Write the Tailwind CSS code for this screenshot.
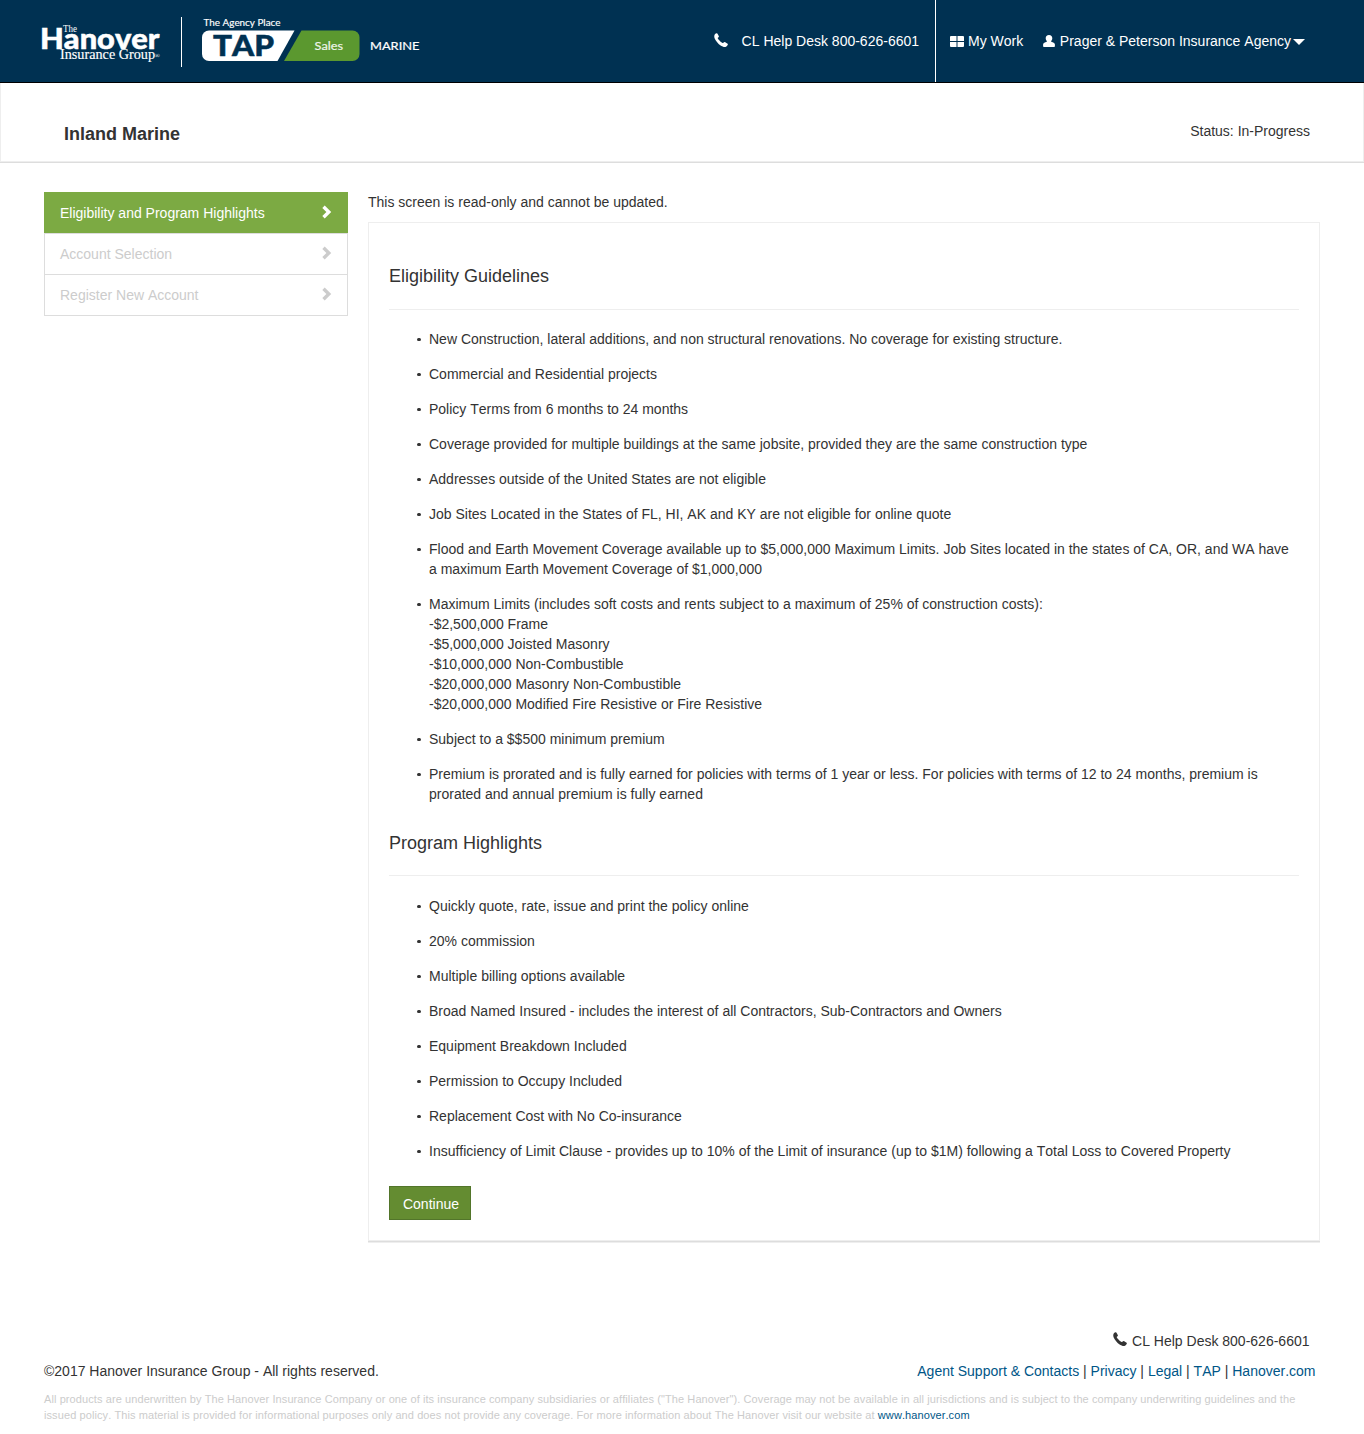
<!DOCTYPE html>
<html lang="en">
<head>
<meta charset="utf-8">
<title>Inland Marine</title>
<script src="https://cdn.jsdelivr.net/npm/@tailwindcss/browser@4"></script>
</head>
<body class="bg-white font-['Liberation_Sans',Arial,sans-serif] text-sm leading-5 text-[#333] [font-kerning:none]">
<svg class="hidden">
  <symbol id="phone" viewBox="0 0 14 14"><path d="M.9 1.300C1.500.500 2.300 0 3 .200c.5.200 1.800 2.500 1.900 3.100.1.700-1.200 1.200-1.200 1.800 0 1 3.900 4.900 5 5 .6.1 1.200-1.300 1.900-1.200.6.1 3 1.600 3.200 2.100.3.800-.7 2.200-1.800 2.700-1.200.6-3.300.2-5.800-1.500C4.200 10.800 1.900 8.200.8 5.800 0 3.900.1 2.300.9 1.300z"/></symbol>
  <symbol id="chev" viewBox="0 0 10 14"><path d="M.3 2.900 2.700.500 9.200 7 2.700 13.500.3 11.100 4.400 7z"/></symbol>
</svg>
<header class="flex h-[83px] justify-between border-b border-black bg-[#003152] text-white">
  <svg class="block shrink-0" width="440" height="82" viewBox="0 0 440 82" fill="#fff">
    <text x="63" y="31.500" font-family="Liberation Serif" font-size="9.500" textLength="14" lengthAdjust="spacingAndGlyphs">The</text>
    <text x="40" y="48.700" font-family="Lato" font-weight="900" font-size="28" stroke="#fff" stroke-width=".5" textLength="119.500" lengthAdjust="spacingAndGlyphs">Hanover</text>
    <text x="60" y="59.300" font-family="Liberation Serif" font-size="14" stroke="#fff" stroke-width=".15" textLength="95" lengthAdjust="spacingAndGlyphs">Insurance Group</text>
    <text x="154.500" y="58" font-family="Liberation Serif" font-size="7">®</text>
    <rect x="181" y="17" width="1" height="50"/>
    <text x="203.500" y="26" font-family="Lato" font-size="9.500" stroke="#fff" stroke-width=".15" textLength="77" lengthAdjust="spacingAndGlyphs">The Agency Place</text>
    <path d="M209 30.500H294.500L277.500 61H209a7 7 0 0 1-7-7V37.500a7 7 0 0 1 7-7z"/>
    <path fill="#5b982f" d="M301.500 30.500H352.500a7 7 0 0 1 7 7V54a7 7 0 0 1-7 7H284z"/>
    <text x="213" y="56.200" fill="#003152" stroke="#003152" stroke-width=".5" font-family="Lato" font-weight="900" font-size="29" textLength="61" lengthAdjust="spacingAndGlyphs">TAP</text>
    <text x="314.500" y="49.700" font-family="Lato" font-size="12" textLength="28.500" lengthAdjust="spacingAndGlyphs" fill="#eef5e9" stroke="#eef5e9" stroke-width=".2">Sales</text>
    <text x="370" y="49.700" font-family="Lato" font-size="12" stroke="#fff" stroke-width=".2" textLength="49.500" lengthAdjust="spacingAndGlyphs">MARINE</text>
  </svg>
  <div class="flex pr-[59px]">
    <div class="flex border-r border-white pt-[31px] pr-4">
      <svg class="mt-[2px] mr-3.5 size-3.5 fill-current"><use href="#phone"/></svg>
      <span>CL Help Desk 800-626-6601</span>
    </div>
    <div class="flex pt-[31px] pl-3.5">
      <svg class="mt-[5px] mr-1 h-[11px] w-3.5 fill-current" viewBox="0 0 14 11"><path d="M1 0h5.500v5H0V1a1 1 0 0 1 1-1zM7.500 0H13a1 1 0 0 1 1 1v4H7.500zM0 6h6.500v5H1a1 1 0 0 1-1-1zM7.500 6H14v4a1 1 0 0 1-1 1H7.500z"/></svg>
      <span>My Work</span>
      <svg class="mt-1 mr-[5px] ml-[19.600px] h-3 w-[12px] fill-current" viewBox="0 0 12 12"><path d="M6 0C8.200 0 9.300 1.500 9.300 3.300 9.300 4.700 8.600 5.800 7.900 6.500l2.800 1.300c.8.400 1.200.9 1.200 1.700v1.700c0 .5-.3.800-.8.800H.900c-.5 0-.8-.3-.8-.8V9.500c0-.8.4-1.300 1.200-1.700l2.800-1.300C3.400 5.800 2.700 4.700 2.700 3.300 2.700 1.500 3.800 0 6 0z"/></svg>
      <span>Prager &amp; Peterson Insurance Agency</span>
      <svg class="mt-2 ml-0.5 h-1.5 w-3 fill-current" viewBox="0 0 12 6"><path d="M0 0h12L6 6z"/></svg>
    </div>
  </div>
</header>
<div class="flex h-[79px] justify-between border-x border-b border-[#eee] pr-[53px] pl-[63px] shadow-[0_1px_0_#ddd]">
  <h1 class="pt-[41px] text-lg leading-5 font-bold">Inland Marine</h1>
  <div class="pt-[38px]">Status: In-Progress</div>
</div>
<main class="flex items-start gap-5 px-11 pt-[30px]">
  <nav class="w-[304px] shrink-0 text-[#ccc]">
    <a class="flex h-[41px] justify-between bg-[#7caa43] pt-[11px] pr-4 pl-4 text-white">Eligibility and Program Highlights<svg class="mt-0.5 h-3.5 w-2.5 fill-current"><use href="#chev"/></svg></a>
    <a class="flex h-[41px] justify-between border-x border-t border-[#ddd] pt-2.5 pr-[15px] pl-[15px]">Account Selection<svg class="mt-0.5 h-3.5 w-2.5 fill-current"><use href="#chev"/></svg></a>
    <a class="flex h-[42px] justify-between border border-[#ddd] pt-2.5 pr-[15px] pl-[15px]">Register New Account<svg class="mt-0.5 h-3.5 w-2.5 fill-current"><use href="#chev"/></svg></a>
  </nav>
  <div class="w-[952px]">
    <p class="mb-2.5">This screen is read-only and cannot be updated.</p>
    <section class="h-[1019px] border border-[#eee] px-5 pt-[43px] shadow-[0_1px_0_#ddd,0_2px_0_#eee]">
      <h2 class="border-b border-[#eee] pb-[23px] text-lg leading-5">Eligibility Guidelines</h2>
      <ul class="mt-[19px] flex flex-col gap-[15px] pl-10 [&>li]:relative [&>li]:whitespace-nowrap [&>li]:before:absolute [&>li]:before:top-[8.5px] [&>li]:before:-left-3 [&>li]:before:size-[3.5px] [&>li]:before:rounded-full [&>li]:before:bg-[#333]">
        <li>New Construction, lateral additions, and non structural renovations. No coverage for existing structure.</li>
        <li>Commercial and Residential projects</li>
        <li>Policy Terms from 6 months to 24 months</li>
        <li>Coverage provided for multiple buildings at the same jobsite, provided they are the same construction type</li>
        <li>Addresses outside of the United States are not eligible</li>
        <li>Job Sites Located in the States of FL, HI, AK and KY are not eligible for online quote</li>
        <li>Flood and Earth Movement Coverage available up to $5,000,000 Maximum Limits. Job Sites located in the states of CA, OR, and WA have<br>a maximum Earth Movement Coverage of $1,000,000</li>
        <li>Maximum Limits (includes soft costs and rents subject to a maximum of 25% of construction costs):<br>-$2,500,000 Frame<br>-$5,000,000 Joisted Masonry<br>-$10,000,000 Non-Combustible<br>-$20,000,000 Masonry Non-Combustible<br>-$20,000,000 Modified Fire Resistive or Fire Resistive</li>
        <li>Subject to a $$500 minimum premium</li>
        <li>Premium is prorated and is fully earned for policies with terms of 1 year or less. For policies with terms of 12 to 24 months, premium is<br>prorated and annual premium is fully earned</li>
      </ul>
      <h2 class="mt-[29px] border-b border-[#eee] pb-[22px] text-lg leading-5">Program Highlights</h2>
      <ul class="mt-5 flex flex-col gap-[15px] pl-10 [&>li]:relative [&>li]:whitespace-nowrap [&>li]:before:absolute [&>li]:before:top-[8.5px] [&>li]:before:-left-3 [&>li]:before:size-[3.5px] [&>li]:before:rounded-full [&>li]:before:bg-[#333]">
        <li>Quickly quote, rate, issue and print the policy online</li>
        <li>20% commission</li>
        <li>Multiple billing options available</li>
        <li>Broad Named Insured - includes the interest of all Contractors, Sub-Contractors and Owners</li>
        <li>Equipment Breakdown Included</li>
        <li>Permission to Occupy Included</li>
        <li>Replacement Cost with No Co-insurance</li>
        <li>Insufficiency of Limit Clause - provides up to 10% of the Limit of insurance (up to $1M) following a Total Loss to Covered Property</li>
      </ul>
      <button class="mt-[25px] h-[34px] w-[82px] border border-[#52752a] bg-[#648c31] pt-0.5 pl-0.5 text-white">Continue</button>
    </section>
  </div>
</main>
<footer class="px-11 pt-[90px]">
  <div class="flex justify-end pr-[10.500px]"><svg class="mt-px mr-[5px] size-3.5 fill-current"><use href="#phone"/></svg>CL Help Desk 800-626-6601</div>
  <div class="mt-2.5 flex justify-between pr-[4.500px]"><span>©2017 Hanover Insurance Group - All rights reserved.</span>
    <span><a class="text-[#005687]">Agent Support &amp; Contacts</a> | <a class="text-[#005687]">Privacy</a> | <a class="text-[#005687]">Legal</a> | <a class="text-[#005687]">TAP</a> | <a class="text-[#005687]">Hanover.com</a></span></div>
  <p class="mt-2.5 text-[11px] leading-4 tracking-[0.09px] whitespace-nowrap text-[#ccc]">All products are underwritten by The Hanover Insurance Company or one of its insurance company subsidiaries or affiliates ("The Hanover"). Coverage may not be available in all jurisdictions and is subject to the company underwriting guidelines and the<br>issued policy. This material is provided for informational purposes only and does not provide any coverage. For more information about The Hanover visit our website at <a class="text-[#005687]">www.hanover.com</a></p>
</footer>
</body>
</html>
